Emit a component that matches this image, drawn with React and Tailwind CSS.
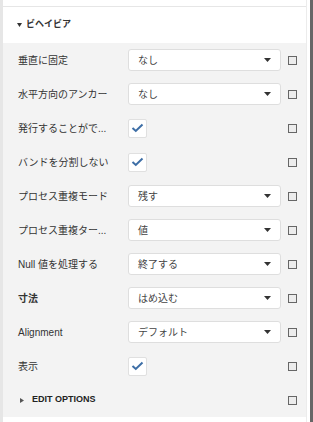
const rows = [
  { label: "垂直に固定", type: "select", value: "なし" },
  { label: "水平方向のアンカー", type: "select", value: "なし" },
  { label: "発行することがで...", type: "check" },
  { label: "バンドを分割しない", type: "check" },
  { label: "プロセス重複モード", type: "select", value: "残す" },
  { label: "プロセス重複ター...", type: "select", value: "値" },
  { label: "Null 値を処理する", type: "select", value: "終了する" },
  { label: "寸法", type: "select", value: "はめ込む", bold: true },
  { label: "Alignment", type: "select", value: "デフォルト" },
  { label: "表示", type: "check" },
];

function MiniBox() {
  return <div className="shrink-0 ml-[7px] w-[9px] h-[9px] border border-[#666] bg-[#ececec]" />;
}

function SelectBox({ value }) {
  return (
    <div className="shrink-0 w-[153px] h-[22px] flex items-center justify-between bg-white border border-[#dedede] rounded-[3px] pl-[9px] pr-[9px]">
      <span className="text-[10px] text-[#444]">{value}</span>
      <svg width="7" height="4" viewBox="0 0 7 4">
        <path d="M0 0 L7 0 L3.5 4 Z" fill="#333" />
      </svg>
    </div>
  );
}

function CheckBox() {
  return (
    <div className="shrink-0 w-[153px] flex">
      <div className="w-[19px] h-[19px] bg-white border border-[#e0e0e0] rounded-[2px] flex items-center justify-center">
        <svg width="13" height="10" viewBox="0 0 13 10">
          <path d="M1.5 5 L4.8 8 L11.5 1.5" fill="none" stroke="#3d6ea6" strokeWidth="2" />
        </svg>
      </div>
    </div>
  );
}

export default function App() {
  return (
    <div className="w-[313px] h-[422px] flex bg-white font-['Liberation_Sans','Noto_Sans_CJK_JP',sans-serif] overflow-hidden">
      <div className="w-[3px] bg-[#e6e6e6]" />
      <div className="flex-1 flex flex-col">
        <div className="h-[6px] bg-white" />
        <div className="h-px bg-[#e6e6e6]" />
        <div className="h-[36px] flex items-center pl-[14px] bg-white">
          <svg width="5" height="4" viewBox="0 0 5 4">
            <path d="M0 0 L5 0 L2.5 4 Z" fill="#333" />
          </svg>
          <span className="ml-[4px] text-[9px] font-bold text-[#333]">ビヘイビア</span>
        </div>
        <div className="bg-[#f3f3f3] flex flex-col">
          {rows.map((r) => (
            <div key={r.label} className="h-[34px] flex items-center pl-[15px]">
              <span className={`shrink-0 w-[110px] text-[10px] text-[#333] whitespace-nowrap ${r.bold ? "font-bold" : ""}`}>
                {r.label}
              </span>
              {r.type === "select" ? <SelectBox value={r.value} /> : <CheckBox />}
              <MiniBox />
            </div>
          ))}
          <div className="h-[34px] flex items-center pl-[15px]">
            <div className="shrink-0 w-[263px] flex items-center pl-[2px]">
              <svg width="4" height="5" viewBox="0 0 4 5">
                <path d="M0 0 L4 2.5 L0 5 Z" fill="#555" />
              </svg>
              <span className="ml-[8px] text-[9px] font-semibold text-[#222]">EDIT OPTIONS</span>
            </div>
            <MiniBox />
          </div>
        </div>
        <div className="flex-1 bg-white" />
      </div>
      <div className="w-[4px] bg-white border-l border-[#ececec]" />
      <div className="w-[3px] bg-[#666]" />
    </div>
  );
}
